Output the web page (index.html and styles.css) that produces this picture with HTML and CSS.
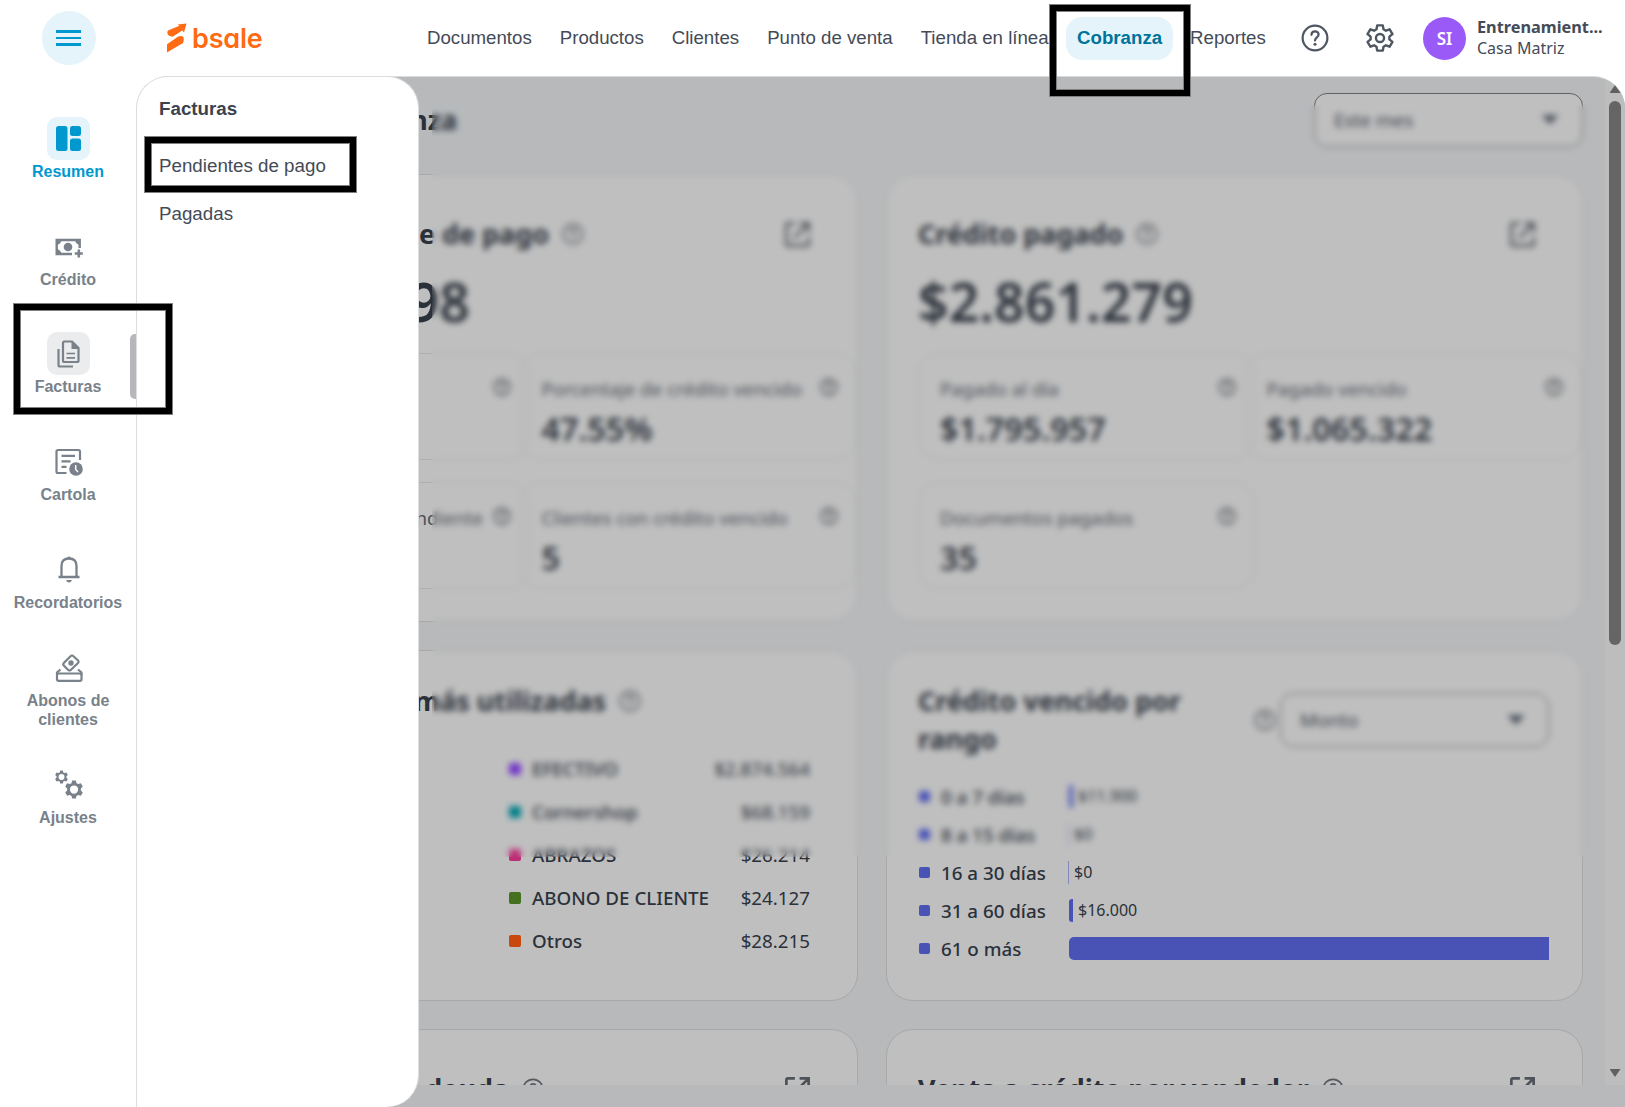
FILE: index.html
```html
<!DOCTYPE html>
<html lang="es">
<head>
<meta charset="utf-8">
<title>Cobranza</title>
<link rel="stylesheet" href="styles.css">
</head>
<body>
<svg class="defs" width="0" height="0">
  <symbol id="help" viewBox="0 0 24 24"><g fill="none" stroke="currentColor" stroke-width="1.9" stroke-linecap="round"><circle cx="12" cy="12" r="10.6"/><path d="M9 9.3c0-3.9 6.1-3.9 6.1-.2 0 2.300-3.100 2.500-3.100 5"/></g><circle cx="12" cy="17.300" r="1.300" fill="currentColor"/></symbol>
  <symbol id="open" viewBox="0 0 24 24"><path fill="none" stroke="currentColor" stroke-width="2.600" d="M9.500 1.300H2.600a1.300 1.300 0 0 0-1.300 1.300v18.800a1.300 1.300 0 0 0 1.300 1.300h18.800a1.300 1.300 0 0 0 1.300-1.300V14.500M14 1.300h8.700V10M22.700 1.300L8.500 15.500"/></symbol>
  <symbol id="gear" viewBox="2 2 20 20"><path fill="none" stroke="currentColor" stroke-width="1.700" stroke-linejoin="round" d="M10 3h4l.5 2.800 1.700 1 2.700-1 2 3.400-2.200 1.800v2l2.200 1.800-2 3.400-2.700-1-1.700 1L14 21h-4l-.5-2.800-1.700-1-2.700 1-2-3.400L5.300 13v-2L3.100 9.200l2-3.400 2.700 1 1.700-1z"/><circle cx="12" cy="12" r="2.900" fill="none" stroke="currentColor" stroke-width="1.700"/></symbol>
  <symbol id="cog" viewBox="0 0 24 24"><path fill="currentColor" fill-rule="evenodd" d="M9.500 0h5l.8 3.500 2.400 1.300 3.500-1 2.500 4.300-2.500 2.500v2.800l2.500 2.500-2.500 4.300-3.500-1-2.400 1.300-.8 3.500h-5l-.8-3.500-2.400-1.300-3.500 1L.3 15.900l2.500-2.500v-2.800L.3 8.100l2.500-4.300 3.500 1 2.400-1.300zM12 6.500a5.500 5.500 0 1 0 0 11 5.500 5.500 0 1 0 0-11z"/></symbol>
</svg>

<header class="topbar">
  <div class="menu-cell"><button class="menu-btn" aria-label="Menú"><i></i><i></i><i></i></button></div>
  <a class="logo">
    <svg width="20" height="30" viewBox="0 0 20 30" fill="#ff6a13"><path d="M10.500 1.500L19.500 .500 17 9.500 15.300 7.500 5.500 13.800 2 12.800Q-.800 10.500 1 7.500L12.500 2.800z"/><path d="M0 29.500V21.200L10.500 14Q14.500 12 16.500 14.500 17.500 17.500 16 20z"/></svg>
    <span>bsale</span>
  </a>
  <nav class="nav">
    <a>Documentos</a><a>Productos</a><a>Clientes</a><a>Punto de venta</a><a>Tienda en línea</a><a class="active">Cobranza</a><a>Reportes</a>
  </nav>
  <svg class="top-icon"><use href="#help"/></svg>
  <svg class="top-icon gear"><use href="#gear"/></svg>
  <div class="avatar">SI</div>
  <div class="user"><b>Entrenamient...</b><span>Casa Matriz</span></div>
</header>

<div class="body">
  <aside class="side">
    <a class="item on"><span class="ic"><svg width="25" height="25" viewBox="0 0 25 25" fill="currentColor"><rect width="11.500" height="25" rx="2.500"/><rect x="14" width="11" height="10" rx="2.500"/><rect x="14" y="12.500" width="11" height="12.500" rx="2.500"/></svg></span>Resumen</a>
    <a class="item"><span class="ic"><svg class="cash" width="28" height="22" viewBox="0 0 28 22"><path fill="none" stroke="currentColor" stroke-width="2.400" d="M17 17H1.700V3h23v8"/><path fill="currentColor" d="M1 2h6Q6 7 2 8zM1 18h6q-1-5-5-6zM25.500 2h-6q1 5 5 6z"/><circle cx="13" cy="10" r="4.300" fill="currentColor"/><path stroke="currentColor" stroke-width="2.600" d="M23.800 12.500v8M19.800 16.500h8"/></svg></span>Crédito</a>
    <a class="item sel"><span class="ic"><svg width="24" height="28" viewBox="0 0 24 28"><g fill="none" stroke="currentColor" stroke-width="2.200"><path d="M6.500 1.500h8.500l6.500 6.500v12.500q0 1.500-1.500 1.500H7.500q-1.500 0-1.500-1.500V3q0-1.500 1.500-1.500zM1.500 9v16q0 1.500 1.500 1.500h13"/><path stroke-width="1.700" d="M9.500 13.500h8.500M9.500 17.800h8.500"/></g><path fill="currentColor" d="M14.500 1.500V9H22z"/></svg></span>Facturas</a>
    <a class="item"><span class="ic"><svg width="28" height="28" viewBox="0 0 28 28"><g fill="none" stroke="currentColor" stroke-width="2.200"><path d="M11.500 25H3q-1.500 0-1.500-1.500v-20Q1.500 2 3 2h20.500Q25 2 25 3.500V12"/><path d="M6.500 7.800h13.500M6.500 13.300h9M6.500 18.800h5"/></g><circle cx="21" cy="21" r="6.800" fill="currentColor"/><path d="M20.700 17v4.500l2.300 2.500" fill="none" stroke="#fff" stroke-width="1.500"/></svg></span>Cartola</a>
    <a class="item"><span class="ic"><svg width="22" height="28" viewBox="0 0 22 28"><path fill="none" stroke="currentColor" stroke-width="2.300" d="M3.500 21.500V11q0-7.500 7.500-7.500t7.500 7.500v10.500M.500 22h21"/><path fill="currentColor" d="M9 3.500a2 2 0 0 1 4 0zM8 25h6q-1 2.500-3 2.500T8 25z"/></svg></span>Recordatorios</a>
    <a class="item two"><span class="ic"><svg width="28" height="28" viewBox="0 0 28 28"><g fill="none" stroke="currentColor" stroke-width="2.200"><path d="M15.500 2.300q1.500-1.600 3 0l4.300 4q1.500 1.500 0 3L16 15.800q-1.500 1.500-3 0l-4-4q-1.500-1.500 0-3z"/><rect x="2" y="19.500" width="24.500" height="7.300" rx="1.500"/><path d="M2 21v-2.500L5.500 15.500M26.500 21v-2.500L23 15.500"/></g><circle cx="16" cy="9" r="2.700" fill="currentColor"/></svg></span>Abonos de<br>clientes</a>
    <a class="item last"><span class="ic"><svg width="28" height="29" viewBox="0 0 28 29"><use href="#cog" width="13" height="14"/><use href="#cog" x="10" y="10" width="18" height="19"/></svg></span>Ajustes</a>
  </aside>

  <main class="main">
    <div class="scroll">
      <div class="content">
        <div class="head"><h1>Cobranza</h1><div class="select"><span>Este mes</span><i class="caret"></i></div></div>
        <div class="grid">
          <section class="card kpi">
            <div class="card-head"><h2 class="w355">pendiente de pago</h2><svg class="q"><use href="#help"/></svg><svg class="op"><use href="#open"/></svg></div>
            <div class="big right">98</div>
            <div class="boxes">
              <div class="box"><div><span></span><svg class="q s"><use href="#help"/></svg></div></div>
              <div class="box"><div><span>Porcentaje de crédito vencido</span><svg class="q s"><use href="#help"/></svg></div><b>47.55%</b></div>
              <div class="box"><div><span class="end">pendiente</span><svg class="q s"><use href="#help"/></svg></div></div>
              <div class="box"><div><span>Clientes con crédito vencido</span><svg class="q s"><use href="#help"/></svg></div><b>5</b></div>
            </div>
          </section>
          <section class="card kpi">
            <div class="card-head"><h2>Crédito pagado</h2><svg class="q"><use href="#help"/></svg><svg class="op"><use href="#open"/></svg></div>
            <div class="big">$2.861.279</div>
            <div class="boxes">
              <div class="box"><div><span>Pagado al día</span><svg class="q s"><use href="#help"/></svg></div><b>$1.795.957</b></div>
              <div class="box"><div><span>Pagado vencido</span><svg class="q s"><use href="#help"/></svg></div><b>$1.065.322</b></div>
              <div class="box"><div><span>Documentos pagados</span><svg class="q s"><use href="#help"/></svg></div><b>35</b></div>
            </div>
          </section>
          <section class="card mid">
            <div class="card-head"><h2 class="w412">más utilizadas</h2><svg class="q"><use href="#help"/></svg></div>
            <ul class="legend">
              <li><i class="c1"></i>EFECTIVO<span>$2.874.564</span></li>
              <li><i class="c2"></i>Cornershop<span>$68.159</span></li>
              <li><i class="c3"></i>ABRAZOS<span>$26.214</span></li>
              <li><i class="c4"></i>ABONO DE CLIENTE<span>$24.127</span></li>
              <li><i class="c5"></i>Otros<span>$28.215</span></li>
            </ul>
          </section>
          <section class="card mid">
            <div class="card-head range"><h2>Crédito vencido por rango</h2><svg class="q"><use href="#help"/></svg><div class="select"><span>Monto</span><i class="caret"></i></div></div>
            <ul class="bars">
              <li><i></i><em>0 a 7 días</em><s style="width:4px"></s><span>$11.900</span></li>
              <li><i></i><em>8 a 15 días</em><s class="thin" style="width:1px"></s><span>$0</span></li>
              <li><i></i><em>16 a 30 días</em><s class="thin" style="width:1px"></s><span>$0</span></li>
              <li><i></i><em>31 a 60 días</em><s style="width:4px"></s><span>$16.000</span></li>
              <li><i></i><em>61 o más</em><s class="full" style="width:480px"></s></li>
            </ul>
          </section>
          <section class="card low">
            <div class="card-head"><h2 class="w314">deuda</h2><svg class="q"><use href="#help"/></svg><svg class="op"><use href="#open"/></svg></div>
          </section>
          <section class="card low">
            <div class="card-head"><h2>Venta a crédito por vendedor</h2><svg class="q"><use href="#help"/></svg><svg class="op"><use href="#open"/></svg></div>
          </section>
        </div>
      </div>
      <div class="track"><i class="up"></i><i class="thumb"></i><i class="down"></i></div>
    </div>
    <div class="frost"></div>
  </main>

  <div class="flyout"><b>Facturas</b><a>Pendientes de pago</a><a>Pagadas</a></div>
  <i class="side-thumb"></i>
</div>

<div class="mark m1"></div>
<div class="mark m2"></div>
<div class="mark m3"></div>
</body>
</html>
```
FILE: styles.css
```css
* { box-sizing: border-box; }
body { margin: 0; width: 1625px; height: 1107px; overflow: hidden; position: relative; background: #fff; font-family: "Liberation Sans", Arial, sans-serif; color: #444b57; }
.defs { position: absolute; }
h1, h2, ul { margin: 0; padding: 0; list-style: none; }

/* top bar */
.topbar { height: 76px; display: flex; align-items: center; }
.menu-cell { width: 137px; display: flex; justify-content: center; }
.menu-btn { width: 54px; height: 54px; border: 0; padding: 0; border-radius: 50%; background: #e4f4fa; display: flex; flex-direction: column; align-items: center; justify-content: center; gap: 4px; }
.menu-btn i { width: 25px; height: 2.700px; background: #0098ce; }
.logo { display: flex; align-items: center; gap: 5px; width: 290px; padding-left: 30px; }
.logo span { font: 600 27px/30px Inter, sans-serif; font-feature-settings: "cv11"; color: #ff6a13; letter-spacing: -.2px; margin-top: 2px; }
.nav { display: flex; align-items: center; gap: 28px; width: 874px; font-size: 18.670px; white-space: nowrap; }
.nav .active { height: 43px; line-height: 42px; padding: 0 11px; margin: 0 -11px 0 -10.500px; border-radius: 16px; background: #e4f4fa; color: #00739b; font-weight: bold; }
.top-icon { width: 28px; height: 28px; color: #4e5661; }
.gear { margin-left: 37px; }
.avatar { width: 43px; height: 43px; border-radius: 50%; margin-left: 29px; background: #9a5af8; color: #fff; font: 600 17px/43px "Noto Sans", sans-serif; text-align: center; }
.user { margin-left: 11px; display: flex; flex-direction: column; font: 16px/21px "Noto Sans", sans-serif; white-space: nowrap; }
.user b { font-size: 16.300px; }

/* left rail */
.body { display: flex; height: 1031px; position: relative; }
.side { width: 137px; padding: 41px 1px 0 0; color: #79818a; }
.item { display: block; height: 107.700px; text-align: center; font-weight: bold; font-size: 16px; line-height: 19px; }
.item.two { height: 107px; margin-top: -9px; }
.item.last { margin-top: 10px; }
.ic { display: flex; width: 43px; height: 43px; margin: 0 auto 2px; align-items: center; justify-content: center; border-radius: 10px; position: relative; left: .5px; }
.cash { margin-top: 3px; }
.on { color: #0098ce; }
.on .ic { background: #e4f4fa; }
.sel .ic { background: #ebeced; }

/* dimmed page */
.main { width: 1488px; height: 1031px; position: relative; overflow: hidden; background: #b7b9bb; border-top: 1px solid #d9dbdc; border-radius: 32px 32px 0 0; font-family: "Noto Sans", sans-serif; color: #2b313a; }
.scroll { display: flex; height: 1008px; overflow: hidden; }
.content { width: 1468px; flex: none; padding: 16px 22px 0 24px; }
.head { display: flex; justify-content: space-between; align-items: center; height: 53px; margin-bottom: 28px; }
h1 { width: 296px; font-size: 26.900px; line-height: 36px; text-align: right; white-space: nowrap; }
.select { width: 269px; height: 54px; flex: none; display: flex; align-items: center; justify-content: space-between; padding: 0 23px 0 19px; border: 1px solid #606264; border-radius: 13px; background: #bfbfbf; font-size: 18.900px; color: #3f454e; }
.caret { width: 18px; height: 10px; background: #4e5661; clip-path: polygon(0 0, 100% 0, 50% 100%); }
.grid { display: grid; grid-template-columns: 697px 697px; grid-template-rows: 448px 351px 300px; gap: 28px; }
.card { border: 1px solid #a7a8a7; border-radius: 27px; background: #bfbfbf; padding: 40px 47px 0 31px; min-width: 0; }
.card-head { display: flex; align-items: center; height: 38px; }
h2 { font-size: 26.900px; line-height: 38px; font-weight: 700; white-space: nowrap; }
.w355, .w412, .w314 { text-align: right; }
.w355 { width: 356px; }
.w412 { width: 413px; }
.w314 { width: 316px; }
.q { width: 22px; height: 22px; margin-left: 13px; flex: none; color: #565b62; }
.q.s { width: 18px; height: 18px; color: #3f454c; margin-top: -3px; }
.op { width: 25px; height: 25px; margin-left: auto; color: #4e5359; }
.big { font-size: 53.600px; line-height: 60px; font-weight: 600; margin-top: 19px; }
.big.right { width: 277px; text-align: right; }
.boxes { display: grid; grid-template-columns: 326.500px 326.500px; grid-auto-rows: 107px; row-gap: 22px; margin-top: 21px; }
.box { width: 337px; border: 1px solid #aeafaf; border-radius: 21px; padding: 20px 18px 0 21px; }
.box div { display: flex; justify-content: space-between; align-items: center; height: 28px; font-size: 18.750px; color: #4c5159; white-space: nowrap; }
.box .end { margin-left: auto; margin-right: -3px; }
.box b { display: block; font-size: 32.300px; line-height: 40px; margin-top: 6px; font-weight: 600; }
.mid { padding-top: 31px; }
.legend { margin: 27px 0 0 316px; font-size: 18.750px; font-weight: 500; }
.legend li { display: flex; align-items: center; height: 43px; white-space: nowrap; }
.legend i { width: 12px; height: 12px; border-radius: 2px; margin-right: 11px; }
.legend span { margin-left: auto; font-weight: 400; }
.c1 { background: #7237c8; } .c2 { background: #007f88; } .c3 { background: #bd2e76; } .c4 { background: #44701f; } .c5 { background: #c9480f; }
.range { height: 76px; margin-right: -14px; }
.range h2 { width: 323px; white-space: normal; }
.range .q { margin: 0 0 0 17px; }
.range .select { margin: 0 0 0 4px; }
.bars { margin: 20px -20px 0 0; font-size: 18.750px; font-weight: 500; }
.bars li { display: flex; align-items: center; height: 37.900px; white-space: nowrap; }
.bars i { width: 11px; height: 11px; margin-left: 1px; flex: none; background: #4953b6; border-radius: 2px; }
.bars em { font-style: normal; width: 128px; margin-left: 11px; flex: none; }
.bars s { height: 23px; flex: none; background: #4953b6; border-radius: 3px 0 0 3px; }
.bars .thin { background: #8389ba; margin-left: -1px; border-radius: 0; }
.bars .full { border-radius: 5px 0 0 5px; }
.bars span { font-size: 16px; font-weight: 400; margin-left: 5px; line-height: 20px; padding-bottom: 1px; }
.low { padding-top: 40px; }
.low h2 { margin-top: -1px; }
.track { width: 20px; flex: none; background: #bdbdbd; display: flex; flex-direction: column; align-items: center; }
.up, .down { width: 11px; height: 8px; background: #606060; }
.up { margin-top: 8px; clip-path: polygon(50% 0, 100% 100%, 0 100%); }
.thumb { width: 12px; height: 544px; margin-top: 8px; border-radius: 6px; background: #656565; }
.down { margin-top: 424px; clip-path: polygon(0 0, 100% 0, 50% 100%); }
.frost { position: absolute; left: 295px; top: 28px; width: 1158px; height: 752px; backdrop-filter: blur(3.300px); }

/* submenu over the page */
.flyout { position: absolute; left: 136px; top: 0; width: 283px; height: 1031px; padding: 21px 22px; background: #fff; border: 1px solid #dcddde; border-width: 1px 1px 0 1px; border-radius: 32px 32px 32px 0; font-size: 18.750px; line-height: 22px; display: flex; flex-direction: column; }
.flyout b { margin-bottom: 35px; color: #3b424e; }
.flyout a { margin-bottom: 26px; }
.side-thumb { position: absolute; left: 130px; top: 258px; width: 6px; height: 65px; border-radius: 5px 0 0 5px; background: #b7b6bc; }

/* annotation frames */
.mark { position: absolute; border: 6px solid #000; outline: 1px solid #808080; box-shadow: inset 0 0 0 1px #808080; }
.m1 { left: 1050px; top: 5px; width: 140px; height: 91px; }
.m2 { left: 145px; top: 137px; width: 211px; height: 55px; }
.m3 { left: 14px; top: 304px; width: 158px; height: 110px; }
```
